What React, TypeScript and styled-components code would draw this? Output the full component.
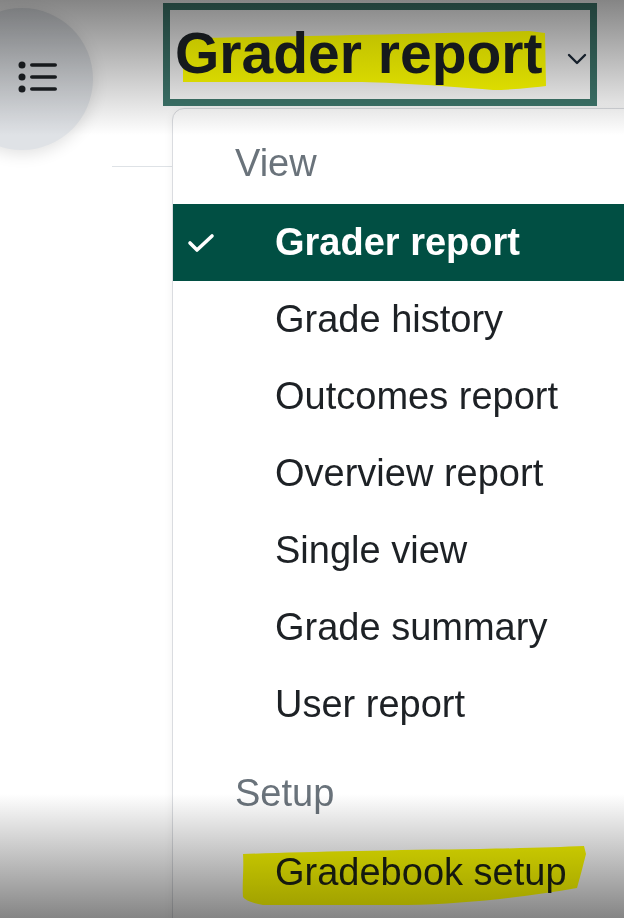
import React from "react";
import styled, { createGlobalStyle } from "styled-components";

const GlobalStyle = createGlobalStyle`
  html, body {
    margin: 0;
    padding: 0;
    background: #fff;
  }
  body {
    font-family: "Liberation Sans", Arial, sans-serif;
    color: #1d2125;
  }
  * {
    box-sizing: border-box;
  }
`;

interface IMenuGroup {
  title: string;
  items: { label: string; active?: boolean; marked?: boolean }[];
}

const groups: IMenuGroup[] = [
  {
    title: "View",
    items: [
      { label: "Grader report", active: true },
      { label: "Grade history" },
      { label: "Outcomes report" },
      { label: "Overview report" },
      { label: "Single view" },
      { label: "Grade summary" },
      { label: "User report" },
    ],
  },
  {
    title: "Setup",
    items: [{ label: "Gradebook setup", marked: true }],
  },
];

export default function App() {
  return (
    <>
      <GlobalStyle />
      <Page>
        <LeftRail>
          <DrawerToggle aria-label="Open index">
            <ListIcon />
          </DrawerToggle>
          <RailRule />
        </LeftRail>

        <Main>
          <ReportButton>
            <Title>
              Grader report
              <TitleMark viewBox="0 0 380 85" aria-hidden>
                <defs>
                  <linearGradient id="titleInk" x1="0" y1="0" x2="0" y2="1">
                    <stop offset="0" stopColor="#c0c000" />
                    <stop offset="1" stopColor="#dcdc00" />
                  </linearGradient>
                </defs>
                <path
                  fill="url(#titleInk)"
                  d="M8 25 C 80 24, 200 22, 354 18 L 370 20 L 371 73 C 345 76, 330 77, 318 77 C 260 72, 210 69, 172 69 C 110 69, 50 69, 8 69 Z"
                />
              </TitleMark>
            </Title>
            <Chevron viewBox="0 0 20 12" aria-hidden>
              <path d="M2 2 L10 10 L18 2" />
            </Chevron>
          </ReportButton>

          <Dropdown>
            {groups.map((group) => (
              <MenuGroup key={group.title}>
                <GroupHeader>{group.title}</GroupHeader>
                {group.items.map((item) => (
                  <MenuItem key={item.label} $active={!!item.active}>
                    <CheckSlot>
                      {item.active && (
                        <CheckIcon viewBox="0 0 28 20" aria-hidden>
                          <path d="M3 10 L10 17 L25 3" />
                        </CheckIcon>
                      )}
                    </CheckSlot>
                    <ItemLabel $marked={!!item.marked}>
                      {item.label}
                      {item.marked && (
                        <LabelMark viewBox="0 0 350 70" aria-hidden>
                          <defs>
                            <linearGradient id="setupInk" x1="0" y1="0" x2="0" y2="1">
                              <stop offset="0" stopColor="#c8c800" />
                              <stop offset="1" stopColor="#a2a200" />
                            </linearGradient>
                          </defs>
                          <path
                            fill="url(#setupInk)"
                            d="M3 10 C 60 8, 150 6, 240 5 C 290 4, 320 3, 344 2 L 346 10 C 343 22, 340 33, 337 44 C 290 52, 230 60, 167 61 L 23 61 C 12 59, 5 56, 3 53 C 2 40, 4 25, 3 10 Z"
                          />
                        </LabelMark>
                      )}
                    </ItemLabel>
                  </MenuItem>
                ))}
              </MenuGroup>
            ))}
          </Dropdown>
        </Main>

        <Shade $edge="top" />
        <Shade $edge="bottom" />
      </Page>
    </>
  );
}

function ListIcon() {
  return (
    <svg width="40" height="32" viewBox="0 0 40 32" fill="#1d2125">
      <circle cx="4" cy="4" r="3.5" />
      <circle cx="4" cy="16" r="3.5" />
      <circle cx="4" cy="28" r="3.5" />
      <rect x="12" y="2.2" width="27" height="3.6" rx="1.8" />
      <rect x="12" y="14.2" width="27" height="3.6" rx="1.8" />
      <rect x="12" y="26.2" width="27" height="3.6" rx="1.8" />
    </svg>
  );
}

const Page = styled.div`
  position: relative;
  display: flex;
  width: 624px;
  height: 918px;
  overflow: hidden;
  background: #fff;
`;

const LeftRail = styled.aside`
  flex: 0 0 172px;
  display: flex;
  flex-direction: column;
  padding-top: 8px;
`;

const DrawerToggle = styled.button`
  width: 142px;
  height: 142px;
  margin-left: -49px;
  padding: 0 0 4px 32px;
  border: none;
  border-radius: 50%;
  background: #dfe2e6;
  box-shadow: 0 4px 16px rgba(0, 0, 0, 0.12);
  display: flex;
  align-items: center;
  justify-content: center;
`;

const RailRule = styled.hr`
  width: 60px;
  margin: 16px 0 0 112px;
  border: none;
  border-top: 1px solid #dee2e6;
`;

const Main = styled.div`
  flex: 0 0 auto;
  display: flex;
  flex-direction: column;
  padding-top: 3px;
`;

const ReportButton = styled.div`
  position: relative;
  width: 434px;
  margin-left: -9px;
  display: flex;
  align-items: flex-start;
  padding: 3px 3px 5px 5px;
  border: 7px solid #3e786d;
  background: transparent;
`;

/* the title and its highlighter stroke sit above the screen shade */
const Title = styled.span`
  position: relative;
  z-index: 2;
  font-size: 57px;
  font-weight: 700;
  line-height: 81px;
  color: #15191c;
  white-space: nowrap;
`;

const TitleMark = styled.svg`
  position: absolute;
  z-index: -1;
  left: 0;
  top: 0;
  width: 380px;
  height: 85px;
  overflow: visible;
  pointer-events: none;
`;

const Chevron = styled.svg`
  width: 20px;
  height: 12px;
  margin: 40px 0 0 auto;
  fill: none;
  stroke: #1d2a3a;
  stroke-width: 2.4;
  stroke-linecap: round;
  stroke-linejoin: round;
`;

const Dropdown = styled.div`
  width: 520px;
  margin-top: 2px;
  padding: 16px 0 80px;
  background: #fff;
  border: 1px solid #dadce0;
  border-radius: 12px;
  box-shadow: 0 2px 10px rgba(0, 0, 0, 0.06);
`;

const MenuGroup = styled.section`
  & + & {
    margin-top: 12px;
  }
`;

const GroupHeader = styled.div`
  padding: 10px 0 12px 62px;
  font-size: 38px;
  line-height: 57px;
  color: #6a737b;
`;

const MenuItem = styled.div<{ $active: boolean }>`
  display: flex;
  align-items: center;
  padding: 10px 0;
  font-size: 38px;
  line-height: 57px;
  font-weight: ${(p) => (p.$active ? 700 : 400)};
  color: ${(p) => (p.$active ? "#fff" : "#1d2125")};
  background: ${(p) => (p.$active ? "#014f43" : "transparent")};
`;

const CheckSlot = styled.span`
  flex: 0 0 102px;
  display: flex;
  align-items: center;
  padding-left: 14px;
`;

const CheckIcon = styled.svg`
  width: 28px;
  height: 20px;
  fill: none;
  stroke: #fff;
  stroke-width: 3.6;
  stroke-linecap: round;
  stroke-linejoin: round;
`;

const ItemLabel = styled.span<{ $marked: boolean }>`
  position: relative;
  z-index: ${(p) => (p.$marked ? 2 : "auto")};
  white-space: nowrap;
  color: ${(p) => (p.$marked ? "#15190f" : "inherit")};
`;

const LabelMark = styled.svg`
  position: absolute;
  z-index: -1;
  left: -35px;
  top: 0;
  width: 350px;
  height: 70px;
  overflow: visible;
  pointer-events: none;
`;

const Shade = styled.div<{ $edge: "top" | "bottom" }>`
  position: absolute;
  z-index: 1;
  left: 0;
  right: 0;
  ${(p) => (p.$edge === "top" ? "top: 0; height: 135px;" : "bottom: 0; height: 124px;")}
  background: linear-gradient(
    ${(p) => (p.$edge === "top" ? "to bottom" : "to top")},
    #858585,
    #ffffff
  );
  mix-blend-mode: multiply;
  pointer-events: none;
`;
